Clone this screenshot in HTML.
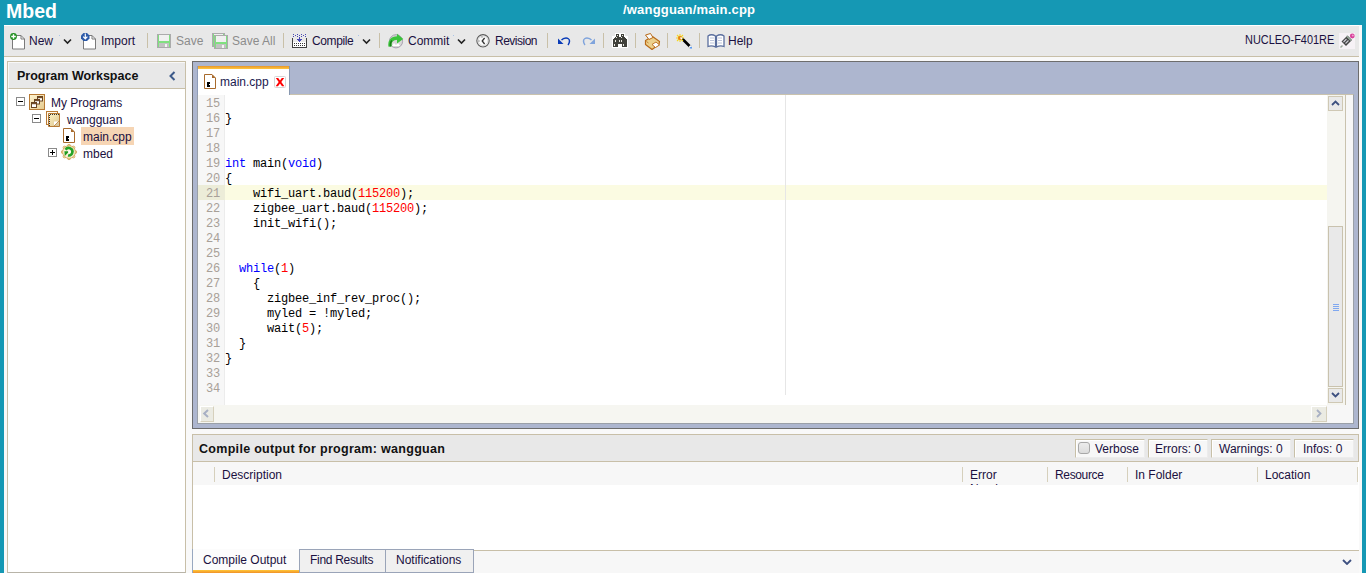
<!DOCTYPE html>
<html><head><meta charset="utf-8">
<style>
*{margin:0;padding:0;box-sizing:border-box}
html,body{width:1366px;height:573px;overflow:hidden;background:#1598b4;font-family:"Liberation Sans",sans-serif;font-size:12px;color:#1a1040}
div,span,svg{position:absolute}
.t{white-space:nowrap;line-height:14px;font-size:12px}
.sep{width:1px;height:15px;top:33px;background:#c9c0a8}
.chev{top:38px}
#code .ln{left:0;width:27px;text-align:right;padding-right:5px;color:#a8a098}
.cl{left:0;height:15px;width:1102px;font-family:"Liberation Mono",monospace;font-size:12px;letter-spacing:-0.2px;line-height:15px;white-space:pre;color:#000}
.kw{position:static;color:#0000ff}
.nm{position:static;color:#ff0000}
.box{background:#f7f7f7;border:1px solid #c8c0a8;border-right-color:#ececec;border-bottom-color:#ececec;box-shadow:inset 1px 1px 0 #fff;height:19px;top:439px}
</style></head><body>
<!-- header -->
<div class="t" style="left:6px;top:-1px;color:#fff;font-weight:bold;font-size:19.5px;line-height:24px">Mbed</div>
<div class="t" style="left:623px;top:2px;color:#fff;font-weight:bold;font-size:13px;line-height:16px;letter-spacing:0.2px">/wangguan/main.cpp</div>

<!-- main bg -->
<div style="left:4px;top:25px;width:1358px;height:548px;background:#f9f9f9"></div>
<!-- toolbar -->
<div id="tb" style="left:4px;top:25px;width:1355px;height:32px;background:#e8e8e8;border-top:1px solid #fff;border-bottom:1px solid #c8bfa8"></div>

<!-- New -->
<svg style="left:10px;top:32px" width="17" height="18" viewBox="0 0 17 18" shape-rendering="crispEdges">
 <path d="M2.5 3.5h8.5l3.5 3.5v10h-12z" fill="#fff" stroke="#7a7a7a" shape-rendering="auto"/>
 <path d="M11 3.5v3.5h3.5" fill="none" stroke="#7a7a7a" shape-rendering="auto"/>
 <circle cx="3.5" cy="4.5" r="3.4" fill="#1f8f1f" shape-rendering="auto"/>
 <path d="M3.5 2.2v4.6M1.2 4.5h4.6" stroke="#fff" stroke-width="1.4" shape-rendering="auto"/>
</svg>
<div class="t" style="left:29px;top:34px">New</div>
<div style="left:59px;top:35px;width:1px;height:1px;background:#a8c4e8"></div>
<svg class="chev" style="left:63px" width="9" height="7" viewBox="0 0 9 7"><path d="M1 1.5l3.5 3.5 3.5-3.5" fill="none" stroke="#222" stroke-width="1.6"/></svg>
<!-- Import -->
<svg style="left:81px;top:32px" width="17" height="18" viewBox="0 0 17 18">
 <path d="M2.5 3.5h8.5l3.5 3.5v10h-12z" fill="#fff" stroke="#7a7a7a"/>
 <path d="M11 3.5v3.5h3.5" fill="none" stroke="#7a7a7a"/>
 <path d="M2.5 1h3.5l2.5 2.5v3l-2.5 2.5h-3.5l-2.5-2.5v-3z" fill="#2c5aa8"/>
 <path d="M4.3 1.6v5M2.2 4.6l2.1 2.2 2.1-2.2" stroke="#fff" stroke-width="1.2" fill="none"/>
</svg>
<div class="t" style="left:101px;top:34px">Import</div>
<div class="sep" style="left:147px"></div>
<!-- Save -->
<svg style="left:157px;top:34px" width="14" height="14" viewBox="0 0 14 14" shape-rendering="crispEdges">
 <rect x="0" y="0" width="14" height="14" fill="#ababab"/>
 <rect x="1" y="1" width="12" height="12" fill="#80e080"/>
 <rect x="2" y="1" width="10" height="6" fill="#f0f0f0"/>
 <rect x="2" y="9" width="10" height="4" fill="#c2c2c2"/>
 <rect x="8" y="10" width="2" height="3" fill="#f4f4f4"/>
</svg>
<div class="t" style="left:176px;top:34px;color:#8c8c8c">Save</div>
<!-- Save all -->
<svg style="left:212px;top:33px" width="16" height="16" viewBox="0 0 16 16" shape-rendering="crispEdges">
 <rect x="0" y="0" width="13" height="14" fill="#ababab"/>
 <rect x="1" y="1" width="11" height="12" fill="#80e080"/>
 <rect x="2" y="1" width="9" height="2" fill="#f0f0f0"/>
 <rect x="2" y="2" width="14" height="14" fill="#ababab"/>
 <rect x="3" y="3" width="12" height="12" fill="#80e080"/>
 <rect x="4" y="3" width="10" height="6" fill="#f0f0f0"/>
 <rect x="4" y="11" width="10" height="4" fill="#c2c2c2"/>
 <rect x="10" y="12" width="2" height="3" fill="#f4f4f4"/>
</svg>
<div class="t" style="left:232px;top:34px;color:#8c8c8c">Save All</div>
<div class="sep" style="left:283px"></div>
<!-- Compile -->
<svg style="left:291px;top:33px" width="16" height="16" viewBox="0 0 16 16" shape-rendering="crispEdges">
 <g fill="#4646b4">
  <rect x="2" y="1" width="1" height="1"/><rect x="6" y="1" width="1" height="1"/><rect x="10" y="1" width="1" height="1"/><rect x="14" y="1" width="1" height="1"/>
  <rect x="4" y="2" width="1" height="1"/><rect x="8" y="2" width="1" height="1"/><rect x="12" y="2" width="1" height="1"/>
  <rect x="2" y="3" width="1" height="1"/><rect x="6" y="3" width="1" height="1"/><rect x="10" y="3" width="1" height="1"/><rect x="14" y="3" width="1" height="1"/>
  <rect x="8" y="4" width="1" height="4"/><rect x="6" y="6" width="5" height="1"/><rect x="7" y="7" width="3" height="1"/><rect x="8" y="8" width="1" height="1"/>
 </g>
 <rect x="2" y="9" width="13" height="5" fill="#fff"/>
 <rect x="1" y="5" width="1" height="10" fill="#404040"/>
 <rect x="15" y="5" width="1" height="10" fill="#404040"/>
 <rect x="1" y="14" width="15" height="1" fill="#404040"/>
 <g fill="#333">
  <rect x="3" y="10" width="1" height="1"/><rect x="5" y="10" width="1" height="1"/><rect x="7" y="10" width="1" height="1"/><rect x="9" y="10" width="1" height="1"/><rect x="11" y="10" width="1" height="1"/><rect x="13" y="10" width="1" height="1"/>
  <rect x="3" y="12" width="1" height="1"/><rect x="5" y="12" width="1" height="1"/><rect x="7" y="12" width="1" height="1"/><rect x="9" y="12" width="1" height="1"/><rect x="11" y="12" width="1" height="1"/><rect x="13" y="12" width="1" height="1"/>
 </g>
</svg>
<div class="t" style="left:312px;top:34px;letter-spacing:-0.4px">Compile</div>
<div style="left:358px;top:35px;width:1px;height:1px;background:#a8c4e8"></div>
<svg class="chev" style="left:362px" width="9" height="7" viewBox="0 0 9 7"><path d="M1 1.5l3.5 3.5 3.5-3.5" fill="none" stroke="#222" stroke-width="1.6"/></svg>
<div class="sep" style="left:379px"></div>
<!-- Commit -->
<svg style="left:388px;top:33px" width="16" height="16" viewBox="0 0 16 16">
 <circle cx="8" cy="8.3" r="6.6" fill="#d8d8d8" stroke="#a8a0b0" stroke-width="1"/>
 <path d="M4 13l2-3 2 2 2-2 2 3z" fill="#fff"/>
 <path d="M2.2 13.5C1.2 9 3.5 5 9.5 5" fill="none" stroke="#3cc43c" stroke-width="3.4"/>
 <path d="M2.5 13.5C2 11 2.5 9 4 7.5" fill="none" stroke="#1a7a1a" stroke-width="1.4"/>
 <path d="M9 0.8l6.2 5.2-6.2 4.6z" fill="#3cc43c"/>
</svg>
<div class="t" style="left:408px;top:34px">Commit</div>
<div style="left:453px;top:35px;width:1px;height:1px;background:#a8c4e8"></div>
<svg class="chev" style="left:457px" width="9" height="7" viewBox="0 0 9 7"><path d="M1 1.5l3.5 3.5 3.5-3.5" fill="none" stroke="#222" stroke-width="1.6"/></svg>
<!-- Revision -->
<svg style="left:475px;top:33px" width="16" height="16" viewBox="0 0 16 16">
 <circle cx="8" cy="7.8" r="6.8" fill="#fff"/>
 <circle cx="8" cy="7.8" r="6.2" fill="#f0f0f0" stroke="#5a5a5a" stroke-width="1.1"/>
 <circle cx="8" cy="7.8" r="4.8" fill="#fafafa" stroke="#c8c8c8" stroke-width="0.6"/>
 <path d="M9.6 5l-2.4 3 2.4 3" fill="none" stroke="#333" stroke-width="1.3"/>
 <rect x="6.5" y="3.5" width="1" height="1" fill="#555"/><rect x="3.5" y="7.5" width="1" height="1" fill="#555"/>
</svg>
<div class="t" style="left:495px;top:34px;letter-spacing:-0.5px">Revision</div>
<div class="sep" style="left:547px"></div>
<!-- undo / redo -->
<svg style="left:557px;top:36px" width="15" height="10" viewBox="0 0 15 10">
 <path d="M4.5 4.2C6 2 7.5 2 9 2s3.5 1 3.5 3-0.8 3-1.5 4" fill="none" stroke="#0a3cb8" stroke-width="1.5"/>
 <path d="M1 2.5v5.5h5.5z" fill="#0a3cb8"/>
</svg>
<svg style="left:581px;top:36px" width="15" height="10" viewBox="0 0 15 10">
 <path d="M10.5 4.2C9 2 7.5 2 6 2s-3.5 1-3.5 3 0.8 3 1.5 4" fill="none" stroke="#80a4dc" stroke-width="1.5"/>
 <path d="M14 2.5v5.5h-5.5z" fill="#80a4dc"/>
</svg>
<div class="sep" style="left:603px"></div>
<!-- binoculars -->
<svg style="left:612px;top:33px" width="16" height="15" viewBox="0 0 16 15" shape-rendering="crispEdges">
 <g fill="#fff"><rect x="3" y="0" width="5" height="5"/><rect x="8" y="0" width="5" height="5"/><rect x="0" y="3" width="16" height="12"/></g>
 <g fill="#40403a">
  <rect x="4" y="1" width="3" height="3"/><rect x="9" y="1" width="3" height="3"/>
  <rect x="3" y="4" width="10" height="2"/>
  <rect x="2" y="5" width="12" height="2"/>
  <rect x="1" y="6" width="14" height="5"/>
  <rect x="1" y="11" width="5" height="3"/><rect x="10" y="11" width="5" height="3"/>
 </g>
 <g fill="#e8e8e0">
  <rect x="5" y="2" width="1" height="1"/><rect x="10" y="2" width="1" height="1"/>
  <rect x="4" y="4" width="1" height="1"/><rect x="9" y="4" width="1" height="1"/>
  <rect x="3" y="7" width="1" height="2"/><rect x="7" y="7" width="1" height="2"/><rect x="9" y="7" width="1" height="2"/>
  <rect x="2" y="11" width="1" height="2"/><rect x="11" y="11" width="1" height="2"/>
 </g>
</svg>
<div class="sep" style="left:635px"></div>
<!-- printer -->
<svg style="left:643px;top:32px" width="18" height="18" viewBox="0 0 18 18">
 <path d="M2.5 8.5l7-4 7 5-0.5 3-7 5-6.5-5z" fill="#ecd08c" stroke="#b86a18" stroke-width="1.2" stroke-linejoin="round"/>
 <path d="M2.5 3l5-1.5 2.5 4-4 2z" fill="#fafafa" stroke="#b86a18" stroke-width="1"/>
 <path d="M9 12.5l4-2.5 3.5 3-4 2.5z" fill="#fff" stroke="#b86a18" stroke-width="0.9"/>
 <path d="M3.5 9.5l2 1.5" stroke="#b86a18" stroke-width="0.8"/>
</svg>
<div class="sep" style="left:667px"></div>
<!-- wand -->
<svg style="left:675px;top:33px" width="18" height="17" viewBox="0 0 18 17">
 <path d="M7 5.5l9 9" stroke="#000" stroke-width="2.6"/>
 <path d="M14.5 13l2 2" stroke="#fff" stroke-width="2.6"/>
 <circle cx="16" cy="14.7" r="1" fill="#4a90f0"/>
 <path d="M5 1v8M1 5h8M2 2l6 6M8 2l-6 6" stroke="#f8d820" stroke-width="1.1"/>
 <circle cx="5" cy="5" r="2" fill="#e8801a"/>
 <path d="M5.5 4.5l1.5 1.5" stroke="#fff" stroke-width="1.6"/>
</svg>
<div class="sep" style="left:699px"></div>
<!-- help book -->
<svg style="left:707px;top:34px" width="18" height="14" viewBox="0 0 18 14">
 <path d="M1 12.5V2C3 0.5 6 0.5 8.5 2v11C6 11.8 3 11.8 1 12.5z" fill="#fff" stroke="#5a6e9e" stroke-width="1.3"/>
 <path d="M17 12.5V2C15 0.5 12 0.5 9.5 2v11c2.5-1.2 5.5-1.2 7.5-0.5z" fill="#fff" stroke="#5a6e9e" stroke-width="1.3"/>
 <path d="M3 4h4M3 6.5h4M3 9h4M11 4h4M11 6.5h4M11 9h4" stroke="#b4bdd6" stroke-width="0.9"/>
</svg>
<div class="t" style="left:728px;top:34px">Help</div>
<!-- platform -->
<div class="t" style="left:1245px;top:33px;font-size:12px;transform:scaleX(0.91);transform-origin:0 0">NUCLEO-F401RE</div>
<svg style="left:1339px;top:33px" width="16" height="16" viewBox="0 0 16 16">
 <rect width="16" height="16" fill="#f6f2f6"/>
 <path d="M2.5 8.5l6-6 4.5 4.5-6 6z" fill="#444"/>
 <path d="M4.5 9l3-3M6.5 10.5l3-3" stroke="#d0d0d8" stroke-width="1.1"/>
 <path d="M7.5 3l4.5 4.5" stroke="#9ab0a0" stroke-width="1.2"/>
 <path d="M1.5 14.5l2-2" stroke="#9aaa9a" stroke-width="1.4"/>
 <circle cx="13.3" cy="3" r="2.4" fill="#d8409a"/>
 <circle cx="13.8" cy="2.5" r="1" fill="#f0a0d0"/>
</svg>

<!-- left panel -->
<div style="left:7px;top:61px;width:179px;height:512px;border:1px solid #c8bfa8;border-bottom-color:#b8b4a8;background:#fff"></div>
<div style="left:8px;top:62px;width:177px;height:27px;background:#e8e8e8;border-top:1px solid #f8f8f8;border-left:1px solid #f8f8f8;border-bottom:1px solid #c8bfa8"></div>
<div class="t" style="left:17px;top:69px;font-weight:bold;font-size:12.5px;color:#111">Program Workspace</div>
<svg style="left:168px;top:71px" width="9" height="10" viewBox="0 0 9 10"><path d="M6.5 1l-4 4 4 4" fill="none" stroke="#3d5a8a" stroke-width="2"/></svg>

<!-- tree -->
<svg style="left:16px;top:97px" width="9" height="9" viewBox="0 0 9 9"><rect x="0.5" y="0.5" width="8" height="8" fill="#fff" stroke="#8a8a8a"/><path d="M2 4.5h5" stroke="#000"/></svg>
<svg style="left:29px;top:94px" width="16" height="16" viewBox="0 0 16 16">
 <defs><linearGradient id="g1" x1="0" y1="0" x2="1" y2="1"><stop offset="0" stop-color="#fff6d4"/><stop offset="1" stop-color="#e4c98c"/></linearGradient></defs>
 <rect x="0.5" y="0.5" width="15" height="15" fill="url(#g1)" stroke="#b87a34"/>
 <g stroke="#6a4420" stroke-width="1">
  <rect x="8.5" y="2.5" width="5" height="4.5" fill="#fff"/><rect x="8.5" y="2.5" width="5" height="1.2" fill="#6a4420"/>
  <rect x="5.5" y="5.5" width="5" height="4.5" fill="#fff"/><rect x="5.5" y="5.5" width="5" height="1.2" fill="#6a4420"/>
  <rect x="2.5" y="8.5" width="5" height="5" fill="#fff"/><rect x="2.5" y="8.5" width="5" height="1.2" fill="#6a4420"/>
 </g>
</svg>
<div class="t" style="left:51px;top:96px">My Programs</div>

<svg style="left:32px;top:114px" width="9" height="9" viewBox="0 0 9 9"><rect x="0.5" y="0.5" width="8" height="8" fill="#fff" stroke="#8a8a8a"/><path d="M2 4.5h5" stroke="#000"/></svg>
<svg style="left:46px;top:111px" width="15" height="16" viewBox="0 0 15 16">
 <defs><linearGradient id="g2" x1="0" y1="0" x2="1" y2="1"><stop offset="0" stop-color="#fdf2c8"/><stop offset="1" stop-color="#dcc48c"/></linearGradient></defs>
 <rect x="0.5" y="0.5" width="11" height="13" fill="#fffaf0" stroke="#b87a34"/>
 <path d="M2.5 2.5h11v13h-11z" fill="url(#g2)" stroke="#b87a34"/>
 <path d="M3.5 15v-11.5h9.5" fill="none" stroke="#333" stroke-dasharray="1 1" shape-rendering="crispEdges"/>
 <path d="M8 15l5-5v5z" fill="#d8c8a0"/>
 <path d="M8 15v-4.5h5z" fill="#fff"/>
 <path d="M8 15l5-5" stroke="#b87a34" stroke-width="0.8"/>
</svg>
<div class="t" style="left:67px;top:113px">wangguan</div>

<svg style="left:62px;top:128px" width="13" height="15" viewBox="0 0 13 15">
 <path d="M1.5 0.5h7.5l3.5 3.5v10.5h-11z" fill="#fff" stroke="#a86a2c"/>
 <path d="M9 0.5l3.5 3.5h-3.5z" fill="#a86a2c"/>
 <g fill="#000" shape-rendering="crispEdges"><rect x="4" y="8" width="2" height="5"/><rect x="6" y="8" width="1" height="2"/><rect x="6" y="11" width="1" height="2"/></g>
</svg>
<div style="left:81px;top:127px;width:53px;height:18px;background:#f6d5b4"></div>
<div class="t" style="left:83px;top:130px">main.cpp</div>

<svg style="left:48px;top:148px" width="9" height="9" viewBox="0 0 9 9"><rect x="0.5" y="0.5" width="8" height="8" fill="#fff" stroke="#8a8a8a"/><path d="M2 4.5h5M4.5 2v5" stroke="#000"/></svg>
<svg style="left:61px;top:144px" width="17" height="17" viewBox="0 0 17 17">
 <g fill="#f6e6b8" stroke="#c89a48" stroke-width="0.7">
  <circle cx="8" cy="1.8" r="1.5"/><circle cx="12.4" cy="3.6" r="1.5"/><circle cx="14.2" cy="8" r="1.5"/><circle cx="12.4" cy="12.4" r="1.5"/>
  <circle cx="8" cy="14.2" r="1.5"/><circle cx="3.6" cy="12.4" r="1.5"/><circle cx="1.8" cy="8" r="1.5"/><circle cx="3.6" cy="3.6" r="1.5"/>
  <circle cx="8" cy="8" r="6.3"/>
 </g>
 <circle cx="8" cy="8" r="5.6" fill="#fbf2d8"/>
 <path d="M4.6 5.8A3.7 3.7 0 1 1 7 11.4" fill="none" stroke="#28a428" stroke-width="2.6"/>
 <path d="M3.4 7.2h5l-4.6 4.9z" fill="#1e9a1e"/>
 <circle cx="8.3" cy="7.8" r="1.3" fill="#fff"/>
</svg>
<div class="t" style="left:83px;top:147px">mbed</div>

<!-- editor -->
<div style="left:192px;top:61px;width:1167px;height:368px;background:#adb6cf;border:1px solid #6d6d6d"></div>
<!-- content -->
<div style="left:197px;top:94px;width:1157px;height:330px;background:#f7f7f7;border-top:1px solid #c9c2ae;border-right:1px solid #9aa0a8;border-bottom:1px solid #9aa0a8;border-left:1px solid #9aa0a8"></div>
<div style="left:198px;top:95px;width:1129px;height:310px;background:#fff"></div>
<!-- tab -->
<div style="left:197px;top:66px;width:93px;height:29px;background:#fff;border-left:1px solid #8e9cb8;border-right:1px solid #8898b0"></div>
<div style="left:198px;top:66px;width:91px;height:3px;background:linear-gradient(#e8952a,#ffc840)"></div>
<svg style="left:204px;top:74px" width="13" height="15" viewBox="0 0 13 15">
 <path d="M0.5 0.5h7.5l3.5 3.5v10.5h-11z" fill="#fff" stroke="#a86a2c"/>
 <path d="M8 0.5l3.5 3.5h-3.5z" fill="#a86a2c"/>
 <g fill="#000" shape-rendering="crispEdges"><rect x="3" y="8" width="2" height="5"/><rect x="5" y="8" width="1" height="2"/><rect x="5" y="11" width="1" height="2"/></g>
</svg>
<div class="t" style="left:220px;top:75px;color:#1a1a50">main.cpp</div>
<svg style="left:274px;top:76px" width="12" height="12" viewBox="0 0 12 12">
 <rect x="0.5" y="0.5" width="11" height="11" rx="1" fill="#fff" stroke="#d6d6d6"/>
 <path d="M1.8 2h2.4l1.8 2.6 1.8-2.6h2.4l-2.9 4 3.1 4.3h-2.4l-2-2.8-2 2.8h-2.4l3.1-4.3z" fill="#f00"/>
</svg>

<div style="left:198px;top:95px;width:27px;height:310px;background:#f7f7f7;border-right:1px solid #ececec"></div>
<div style="left:198px;top:185px;width:27px;height:15px;background:#ececd8"></div>
<div style="left:225px;top:185px;width:1102px;height:15px;background:#fbfbe2"></div>
<div style="left:785px;top:95px;width:1px;height:300px;background:#e6e6e6"></div>

<div id="code" style="left:198px;top:97px;width:1129px;height:310px">
 <div class="cl ln" style="top:0px">15</div>
 <div class="cl ln" style="top:15px">16</div>
 <div class="cl ln" style="top:30px">17</div>
 <div class="cl ln" style="top:45px">18</div>
 <div class="cl ln" style="top:60px">19</div>
 <div class="cl ln" style="top:75px">20</div>
 <div class="cl ln" style="top:90px">21</div>
 <div class="cl ln" style="top:105px">22</div>
 <div class="cl ln" style="top:120px">23</div>
 <div class="cl ln" style="top:135px">24</div>
 <div class="cl ln" style="top:150px">25</div>
 <div class="cl ln" style="top:165px">26</div>
 <div class="cl ln" style="top:180px">27</div>
 <div class="cl ln" style="top:195px">28</div>
 <div class="cl ln" style="top:210px">29</div>
 <div class="cl ln" style="top:225px">30</div>
 <div class="cl ln" style="top:240px">31</div>
 <div class="cl ln" style="top:255px">32</div>
 <div class="cl ln" style="top:270px">33</div>
 <div class="cl ln" style="top:285px">34</div>
 <div style="left:27px;top:0;width:1102px;height:310px">
  <div class="cl" style="top:15px">}</div>
  <div class="cl" style="top:60px"><span class="kw">int</span> main(<span class="kw">void</span>)</div>
  <div class="cl" style="top:75px">{</div>
  <div class="cl" style="top:90px">    wifi_uart.baud(<span class="nm">115200</span>);</div>
  <div class="cl" style="top:105px">    zigbee_uart.baud(<span class="nm">115200</span>);</div>
  <div class="cl" style="top:120px">    init_wifi();</div>
  <div class="cl" style="top:165px">  <span class="kw">while</span>(<span class="nm">1</span>)</div>
  <div class="cl" style="top:180px">    {</div>
  <div class="cl" style="top:195px">      zigbee_inf_rev_proc();</div>
  <div class="cl" style="top:210px">      myled = !myled;</div>
  <div class="cl" style="top:225px">      wait(<span class="nm">5</span>);</div>
  <div class="cl" style="top:240px">  }</div>
  <div class="cl" style="top:255px">}</div>
 </div>
</div>

<!-- vertical scrollbar -->
<div style="left:1327px;top:95px;width:18px;height:310px;background:#f5f5f0"></div>
<div style="left:1345px;top:95px;width:1px;height:310px;background:#c9c2ae"></div>
<div style="left:1328px;top:96px;width:15px;height:15px;background:#e9e9e9;border:1px solid #cfc8b4"></div>
<svg style="left:1331px;top:100px" width="9" height="6" viewBox="0 0 9 6"><path d="M1 5l3.5-3.5 3.5 3.5" fill="none" stroke="#3d5080" stroke-width="1.8"/></svg>
<div style="left:1328px;top:226px;width:15px;height:161px;background:#e9e9e9;border:1px solid #c9c2ae"></div>
<div style="left:1333px;top:304px;width:6px;height:7px;background:repeating-linear-gradient(#80a8f0 0 1px,transparent 1px 2px)"></div>
<div style="left:1328px;top:388px;width:15px;height:15px;background:#e9e9e9;border:1px solid #cfc8b4"></div>
<svg style="left:1331px;top:392px" width="9" height="6" viewBox="0 0 9 6"><path d="M1 1l3.5 3.5 3.5-3.5" fill="none" stroke="#3d5080" stroke-width="1.8"/></svg>
<!-- horizontal scrollbar -->
<div style="left:198px;top:405px;width:1129px;height:18px;background:#f6f6f1"></div>
<div style="left:200px;top:406px;width:14px;height:16px;background:#ebebe3;border:1px solid #fff;border-right-color:#d6d0bc;border-bottom-color:#d6d0bc"></div>
<svg style="left:202px;top:409px" width="7" height="9" viewBox="0 0 6 9"><path d="M5.5 1l-3.8 3.5 3.8 3.5" fill="none" stroke="#a8b0c4" stroke-width="2"/></svg>
<div style="left:1311px;top:406px;width:16px;height:16px;background:#ebebe3;border:1px solid #fff;border-right-color:#d6d0bc;border-bottom-color:#d6d0bc"></div>
<svg style="left:1316px;top:409px" width="6" height="9" viewBox="0 0 6 9"><path d="M1 1l3.5 3.5-3.5 3.5" fill="none" stroke="#a8b0c4" stroke-width="1.8"/></svg>

<!-- compile output -->
<div style="left:192px;top:434px;width:1167px;height:139px;background:#fff;border:1px solid #c8bfa8;border-bottom:none;border-right:none"></div>
<div style="left:192px;top:434px;width:1167px;height:28px;background:#e8e8e8;border:1px solid #c8bfa8;border-left:none;border-top:none;margin-left:1px;width:1166px;top:435px;height:27px"></div>
<div class="t" style="left:199px;top:442px;font-weight:bold;font-size:12.5px;color:#111;letter-spacing:0.3px">Compile output for program: wangguan</div>
<div class="box" style="left:1075px;width:70px"></div>
<div style="left:1078px;top:442px;width:12px;height:12px;background:linear-gradient(#ececec,#dcdcdc);border:1px solid #a8a8a8;border-radius:3px"></div>
<div class="t" style="left:1095px;top:442px">Verbose</div>
<div class="box" style="left:1148px;width:60px"></div>
<div class="t" style="left:1155px;top:442px">Errors: 0</div>
<div class="box" style="left:1211px;width:80px"></div>
<div class="t" style="left:1219px;top:442px">Warnings: 0</div>
<div class="box" style="left:1294px;width:60px"></div>
<div class="t" style="left:1303px;top:442px">Infos: 0</div>

<div style="left:193px;top:462px;width:1165px;height:23px;background:#f7f7f7;overflow:hidden">
 <div style="left:21px;top:5px;width:1px;height:15px;background:#d6d0bc"></div>
 <div class="t" style="left:29px;top:6px">Description</div>
 <div style="left:769px;top:5px;width:1px;height:15px;background:#d6d0bc"></div>
 <div class="t" style="left:777px;top:6px;white-space:normal;width:60px">Error Number</div>
 <div style="left:854px;top:5px;width:1px;height:15px;background:#d6d0bc"></div>
 <div class="t" style="left:862px;top:6px;letter-spacing:-0.35px">Resource</div>
 <div style="left:934px;top:5px;width:1px;height:15px;background:#d6d0bc"></div>
 <div class="t" style="left:942px;top:6px">In Folder</div>
 <div style="left:1064px;top:5px;width:1px;height:15px;background:#d6d0bc"></div>
 <div class="t" style="left:1072px;top:6px">Location</div>
 <div style="left:1164px;top:5px;width:1px;height:15px;background:#d6d0bc"></div>
</div>

<!-- bottom tabs -->
<div style="left:193px;top:550px;width:1166px;height:23px;background:#f7f7f7;border-top:1px solid #c8bfa8"></div>
<div style="left:192px;top:549px;width:107px;height:24px;background:#fcfcfc;border-left:1px solid #98a8c0"></div>
<div style="left:193px;top:570px;width:106px;height:3px;background:linear-gradient(#ffc838,#f09028)"></div>
<div class="t" style="left:203px;top:553px">Compile Output</div>
<div style="left:299px;top:549px;width:87px;height:24px;background:#f0f0f0;border:1px solid #9aa4b8;border-bottom-color:#9aa4b8"></div>
<div class="t" style="left:310px;top:553px;letter-spacing:-0.3px">Find Results</div>
<div style="left:385px;top:549px;width:89px;height:24px;background:#f0f0f0;border:1px solid #9aa4b8"></div>
<div class="t" style="left:396px;top:553px">Notifications</div>
<svg style="left:1342px;top:559px" width="10" height="6" viewBox="0 0 10 6"><path d="M1 1l4 4 4-4" fill="none" stroke="#3d5080" stroke-width="1.8"/></svg>
</body></html>
